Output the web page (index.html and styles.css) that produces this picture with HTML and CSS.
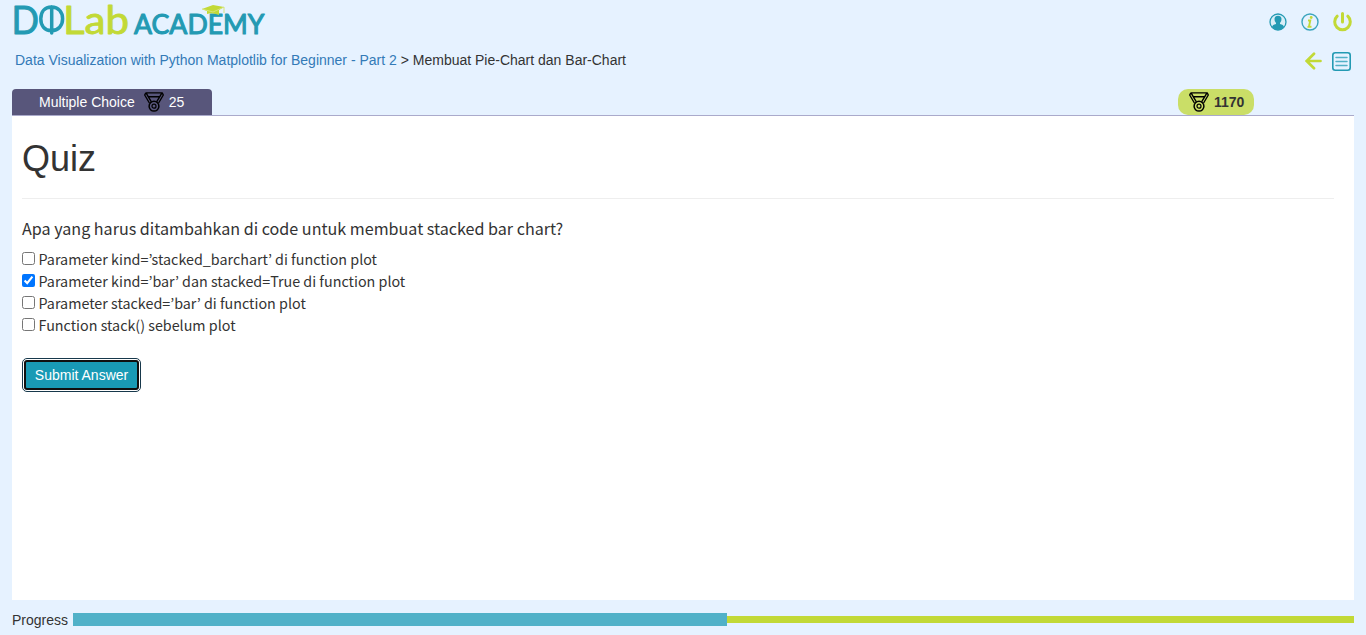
FILE: index.html
```html
<!DOCTYPE html>
<html lang="id">
<head>
<meta charset="utf-8">
<title>DQLab Academy - Quiz</title>
<link rel="stylesheet" href="styles.css">
</head>
<body>
<svg class="defs" width="0" height="0">
  <symbol id="medal" viewBox="0 0 20 20">
    <g fill="none" stroke="currentColor" stroke-linejoin="round">
      <path d="M1.800 .9H18.200L19.300 3L14.600 11M1.800 .9L.7 3L5.400 11M2.200 1.200L4.200 4.700H15.800L17.800 1.200M4.200 4.700L7.400 9.800M15.800 4.700L12.600 9.800" stroke-width="1.400"/>
      <circle cx="10" cy="14.200" r="4.900" stroke-width="1.500"/>
      <circle cx="10" cy="14.200" r="2" stroke-width="1.200"/>
    </g>
  </symbol>
</svg>
<header class="topbar">
  <svg class="logo" width="254" height="38" viewBox="0 0 254 38" aria-label="DQLab Academy">
    <text class="logo-text logo-large teal" x="-3.500" y="33.700" textLength="27.500" lengthAdjust="spacingAndGlyphs">D</text>
    <path d="M36.500 7C29.500 7 25.800 12 25.800 18.800S29.500 30.600 36.500 30.600S47.600 25.500 47.600 18.800S43.500 7 36.500 7ZM36.700 7V33" fill="none" stroke="#239ab3" stroke-width="3.500" stroke-linecap="round"/>
    <text class="logo-text logo-large lime" x="48" y="33.700" textLength="66" lengthAdjust="spacingAndGlyphs">Lab</text>
    <text class="logo-text logo-small teal" x="119" y="34" textLength="130.500" lengthAdjust="spacingAndGlyphs">ACADEMY</text>
    <path class="cap" d="M187 9L198 5L209 7L204 10V15Q197 12 192 14V11Z"/>
    <path d="M187 9L198 12L209 7V13" fill="none" stroke="#d5e37a" stroke-width="1"/>
  </svg>
  <nav class="tools">
    <svg width="18" height="18" viewBox="0 0 18 18">
      <circle cx="9" cy="9" r="8" fill="#d9eef7" stroke="#239ab3" stroke-width="1.300"/>
      <path d="M3 14Q3.500 11.500 7 11V10Q5.300 8.500 5.500 5.800Q5.800 2.700 9 2.700T12.500 5.800Q12.700 8.500 11 10V11Q14.500 11.500 15 14Q12.500 17 9 17T3 14Z" fill="#239ab3"/>
    </svg>
    <svg width="18" height="18" viewBox="0 0 18 18">
      <circle cx="9" cy="9" r="8" fill="none" stroke="#3ba5bd" stroke-width="1.400"/>
      <path d="M7 7.500H9.300L7.900 13.800H10.500M6.500 13.900H9" fill="none" stroke="#c2d936" stroke-width="1.900"/>
      <circle cx="10.200" cy="4.500" r="1.400" fill="#c2d936"/>
    </svg>
    <svg width="19" height="20" viewBox="0 0 19 20">
      <path d="M4.200 4.200A7.800 7.800 0 1 0 14.800 4.200M9.500 1.600V10" fill="none" stroke="#c2d936" stroke-width="3" stroke-linecap="round"/>
    </svg>
  </nav>
</header>
<div class="crumbs">
  <div><a class="course">Data Visualization with Python Matplotlib for Beginner - Part 2</a> &gt; Membuat Pie-Chart dan Bar-Chart</div>
  <div class="page-nav">
    <svg width="17" height="18" viewBox="0 0 17 18">
      <path d="M15.500 9H2M9 1.800L1.700 9L9 16.200" fill="none" stroke="#c2d936" stroke-width="2.700" stroke-linecap="round"/>
    </svg>
    <svg width="19" height="19" viewBox="0 0 19 19">
      <rect x=".8" y=".8" width="17.400" height="17.400" rx="2.500" fill="none" stroke="#239ab3" stroke-width="1.600"/>
      <path d="M4 5.500H15M4 9.500H15M4 13.500H15" stroke="#51b0c6" stroke-width="1.500" stroke-linecap="round"/>
    </svg>
  </div>
</div>
<main>
  <div class="tabs">
    <div class="tab"><span>Multiple Choice</span><svg class="medal"><use href="#medal"/></svg><span>25</span></div>
    <div class="score"><svg class="medal"><use href="#medal"/></svg><span>1170</span></div>
  </div>
  <section class="panel">
    <h1>Quiz</h1>
    <p class="question"><span>Apa yang harus ditambahkan di code untuk membuat stacked bar chart?</span></p>
    <div class="options">
      <label><input type="checkbox"><span>Parameter kind=’stacked_barchart’ di function plot</span></label>
      <label><input type="checkbox" checked><span>Parameter kind=’bar’ dan stacked=True di function plot</span></label>
      <label><input type="checkbox"><span>Parameter stacked=’bar’ di function plot</span></label>
      <label><input type="checkbox"><span>Function stack() sebelum plot</span></label>
    </div>
    <button class="submit">Submit Answer</button>
  </section>
</main>
<footer class="progress">
  <span>Progress</span>
  <div class="track"><div class="done" style="width:51.03%"></div><div class="rest"></div></div>
</footer>
</body>
</html>
```
FILE: styles.css
```css
* { box-sizing: border-box; }
body {
  margin: 0;
  height: 635px;
  overflow: hidden;
  display: flex;
  flex-direction: column;
  background: #e6f2ff;
  color: #333;
  font: 14px/20px "Liberation Sans", Arial, sans-serif;
}
svg { display: block; flex: none; }
.defs { position: absolute; }
.topbar {
  height: 42px;
  padding: 0 14.500px 0 15px;
  display: flex;
  justify-content: space-between;
}
.logo { overflow: visible; }
.logo-text { font-family: Lato, sans-serif; stroke-linejoin: round; }
.logo-large { font-size: 38px; stroke-width: .9px; }
.logo-small { font-size: 27px; stroke-width: 1.1px; }
.teal { fill: #239ab3; stroke: #239ab3; }
.lime { fill: #c2d936; stroke: #c2d936; }
.cap { fill: #c2d936; }
.tools { display: flex; align-items: center; gap: 14px; padding-top: 1px; }
.crumbs {
  height: 47px;
  padding: 8px 15px 0;
  display: flex;
  justify-content: space-between;
}
.course { color: #337ab7; }
.page-nav { display: flex; gap: 10px; padding-top: 2px; height: 21px; }
main {
  height: 511px;
  margin: 0 12px;
  display: flex;
  flex-direction: column;
}
.tabs {
  height: 27px;
  display: flex;
  justify-content: space-between;
  border-bottom: 1px solid #aaaacb;
}
.tab {
  width: 200px;
  display: flex;
  align-items: center;
  padding-left: 27px;
  border-radius: 4px 4px 0 0;
  background: #58567b;
  color: #fff;
}
.medal { width: 20px; height: 20px; color: #000; }
.tab .medal { margin: 0 5px 0 9px; }
.score {
  width: 76px;
  margin-right: 100px;
  padding-left: 11px;
  display: flex;
  align-items: center;
  gap: 5px;
  border-radius: 10px;
  background: #cade67;
  font-weight: 700;
}
.panel { flex: 1; background: #fff; padding: 22px 20px 0 10px; }
h1 {
  margin: 0 0 18px;
  height: 61px;
  border-bottom: 1px solid #eee;
  font-size: 36px;
  line-height: 41px;
  font-weight: 400;
}
.question, .options { font-family: "Noto Sans CJK JP", sans-serif; }
.question { margin: 0 0 9px; font-size: 16.12px; line-height: 22px; }
.options { font-size: 14.32px; line-height: 22px; }
.options label { display: flex; height: 22px; }
.options input { width: 13px; height: 13px; margin: 4px 3.500px 0 0; accent-color: #0075ff; }
.submit {
  display: block;
  margin: 24px 0 0 2px;
  width: 115px;
  height: 30px;
  padding: 0;
  border: 2px solid #101010;
  border-radius: 3px;
  outline: 1px solid #17384b;
  outline-offset: 1px;
  background: #199ab5;
  color: #fff;
  font: 14px/20px "Liberation Sans", Arial, sans-serif;
}
.progress {
  height: 35px;
  padding: 4px 12px 0;
  display: flex;
  align-items: center;
}
.progress span { width: 61px; padding-top: 1px; }
.track { flex: 1; display: flex; align-items: center; height: 13px; }
.done { height: 13px; background: #50b1c8; }
.rest { flex: 1; height: 7px; background: #c2d936; }
```
